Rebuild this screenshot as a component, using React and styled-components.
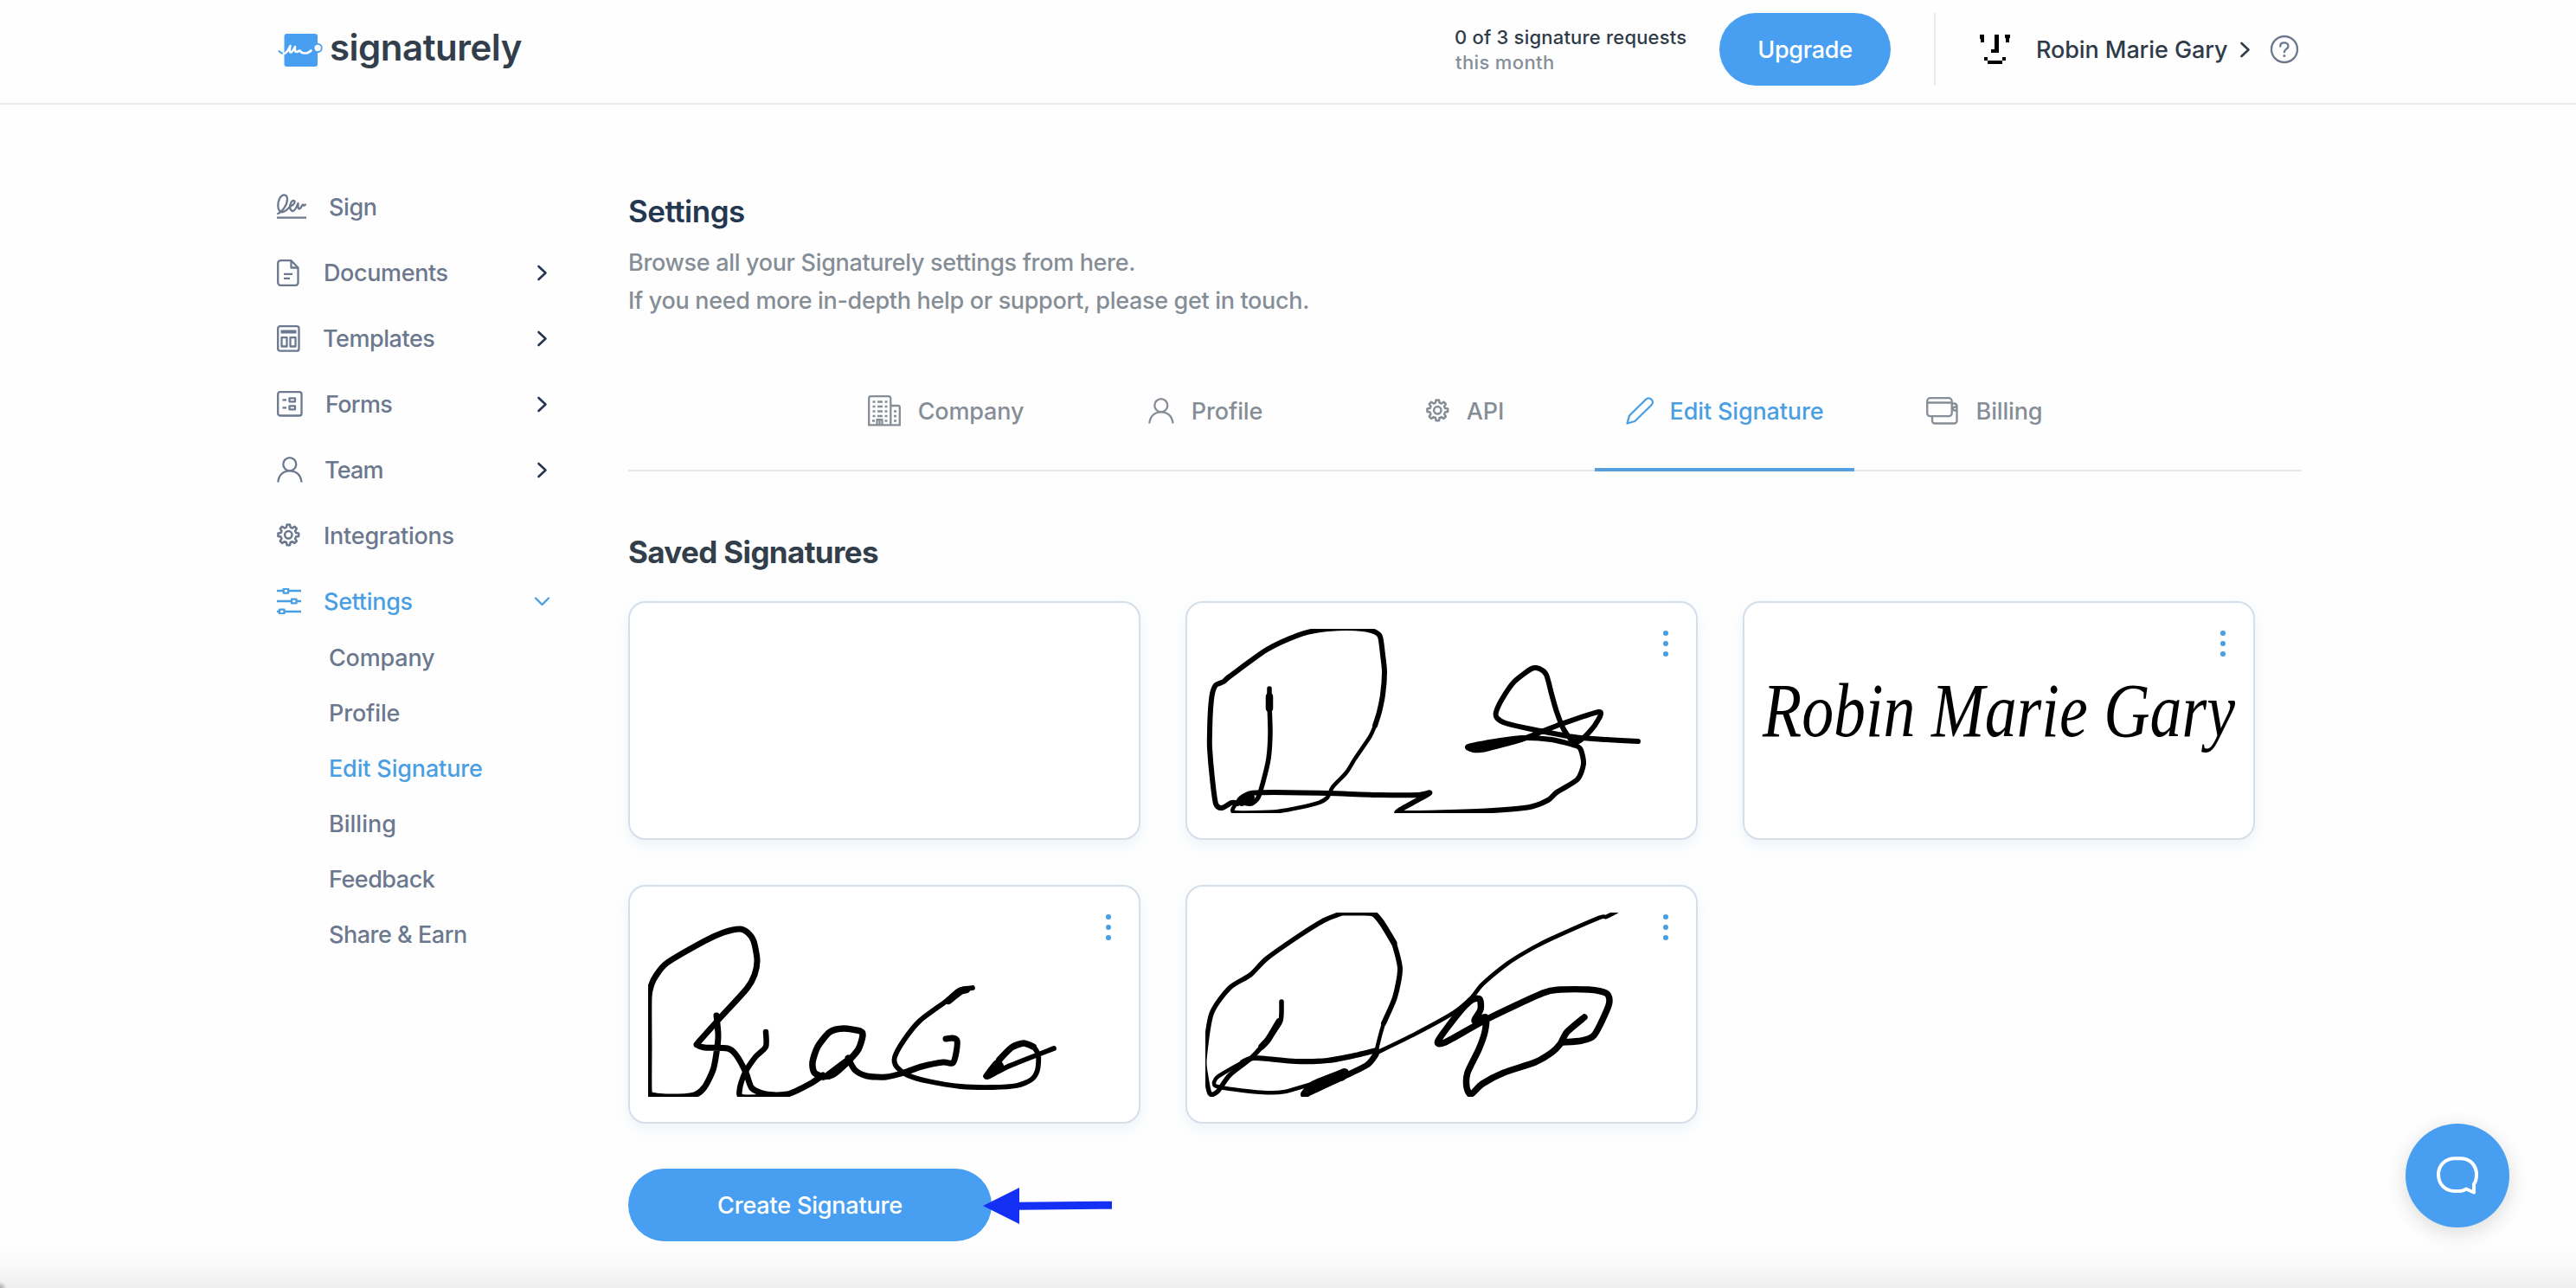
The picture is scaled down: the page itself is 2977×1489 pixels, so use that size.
import React from 'react';
import styled, { createGlobalStyle, css } from 'styled-components';

const BLUE = '#4a9fe3';
const BUTTON = '#489ff1';
const GREY = '#6b788e';
const MUTED = '#858e96';
const NAVY = '#243750';

// Turns a list of pen positions into a smooth svg path.
const pen = (text) => {
  const p = text.split(' ').map((s) => s.split(',').map(Number));
  let d = `M${p[0][0]} ${p[0][1]}`;
  for (let i = 0; i < p.length - 1; i++) {
    const a = p[i - 1] || p[i];
    const b = p[i];
    const c = p[i + 1];
    const e = p[i + 2] || c;
    const k = 8;
    d += `C${(b[0] + (c[0] - a[0]) / k).toFixed(1)} ${(b[1] + (c[1] - a[1]) / k).toFixed(1)} ${(c[0] - (e[0] - b[0]) / k).toFixed(1)} ${(c[1] - (e[1] - b[1]) / k).toFixed(1)} ${c[0]} ${c[1]}`;
  }
  return d;
};

const gearPath = (c, outer, inner) => {
  const pts = [];
  for (let i = 0; i < 8; i++) {
    [[-15, inner], [-8, outer], [8, outer], [15, inner]].forEach(([deg, r]) => {
      const t = ((i * 45 + deg) * Math.PI) / 180;
      pts.push(`${(c + r * Math.sin(t)).toFixed(1)} ${(c - r * Math.cos(t)).toFixed(1)}`);
    });
  }
  return `M${pts.join('L')}Z`;
};

const Line = ({ w, h, sw = 2.3, children, ...rest }) => (
  <svg width={w} height={h} viewBox={`0 0 ${w} ${h}`} fill="none" stroke="currentColor" strokeWidth={sw} strokeLinejoin="round" {...rest}>
    {children}
  </svg>
);

const SignIcon = () => (
  <Line w={34} h={30} strokeLinecap="round">
    <path d="M1.200 23C6 21 12 13 12 6.500C12 3 10.500 1.200 8 1.400C4 1.800 1.200 8 1.300 14C1.400 19 4 22 7.500 21C10.500 20 13 17 15 15C18 13.500 21 11.500 20.500 9C20 6.500 16 8 15.300 13C14.800 17 16 20.200 18.500 20C21.500 19.500 23 15 24.500 11C24.500 13.500 24 17.500 26 17.500C28 17.500 29 12.500 30 12.500C30.500 14.500 32 13.500 33 12.500" />
    <path d="M0 27.700H34" strokeLinecap="butt" />
  </Line>
);
const FileIcon = () => (
  <Line w={26} h={31}>
    <path d="M16.500 1.200H4.200a3 3 0 0 0-3 3v22.600a3 3 0 0 0 3 3H21.500a3 3 0 0 0 3-3V9.500Z" />
    <path d="M16.500 1.200V9.500H24.500M8 16.800H18M8 21.800H15" />
  </Line>
);
const TemplateIcon = () => (
  <Line w={27} h={31}>
    <rect x="1.200" y="1.200" width="24.300" height="28.500" rx="2.500" />
    <rect x="4.500" y="5.500" width="18" height="4" fill="currentColor" stroke="none" />
    <path d="M5.500 14.200h6v10.300h-6zM15.500 14.200h6v10.300h-6z" />
  </Line>
);
const FormIcon = () => (
  <Line w={30} h={30}>
    <rect x="1.200" y="1.200" width="27.300" height="27.300" rx="2.500" />
    <path d="M6.500 10.300h4.500M6.500 19.300h4.500M14.500 8.300h6.500v4h-6.500zM14.500 17.300h6.500v4h-6.500z" />
  </Line>
);
const UserIcon = () => (
  <Line w={30} h={30}>
    <circle cx="14.800" cy="8.700" r="7.500" />
    <path d="M1.300 29.500C2 21 7.500 16.300 14.800 16.300S27.700 21 28.500 29.500" />
  </Line>
);
const GearIcon = () => (
  <Line w={27} h={28} sw={2.500}>
    <path d={gearPath(13.3, 12, 9)} />
    <circle cx="13.300" cy="13.300" r="4.200" />
  </Line>
);
const SlidersIcon = () => (
  <Line w={28} h={30}>
    <path d="M0 3H7.500M13.500 3H28M0 15H16.500M22.500 15H28M8.700 27H28M0 27H2.700" />
    <path d="M7.700 .8h5.500v4.800h-5.500zM17 12.600h5.500v4.800H17zM3 24.600h5.500v4.800H3z" />
  </Line>
);
const CompanyIcon = () => (
  <Line w={38} h={36}>
    <path d="M1.200 34.300V3.500a2.300 2.300 0 0 1 2.300-2.300H24a2.300 2.300 0 0 1 2.300 2.300V34.300M26.300 12H35a1.800 1.800 0 0 1 1.800 1.800V34.300M0 34.300H38" />
    <path d="M10.500 34V28.200H16.500V34M13.500 28V34" />
    <path d="M5.500 7.500H22.500M5.500 13H22.500M5.500 18.500H22.500M5.500 24H22.500" strokeWidth="2.600" strokeDasharray="3 2.500 6 2.500" />
    <path d="M5 29.500h3M19.500 29.500h3M30 18.500h3M30 24h3M30 29.500h3" strokeWidth="2.600" />
  </Line>
);
const PencilIcon = () => (
  <Line w={33} h={32}>
    <path d="M1.500 30.500L4 21.500L23 2.800a4.500 4.500 0 0 1 6.500 6.500L10.300 28Z" />
  </Line>
);
const BillingIcon = () => (
  <Line w={38} h={32}>
    <rect x="1.200" y="1.200" width="28.500" height="21" rx="3.500" />
    <path d="M1.500 6.500H29.500M30 7.500H32.500a3 3 0 0 1 3 3V27.500a3 3 0 0 1-3 3H10a3 3 0 0 1-3-3V22.500" />
    <path d="M35.500 11.500h-2.500a1.800 1.800 0 0 0 0 4h2.500" />
  </Line>
);
const ChevronIcon = () => (
  <Line w={13} h={19} sw={2.600} strokeLinecap="round">
    <path d="M2.500 2L10.500 9.500L2.500 17" />
  </Line>
);
const ChevronDownIcon = () => (
  <Line w={19} h={13} sw={2.400} strokeLinecap="round">
    <path d="M2 2.500L9.500 10L17 2.500" />
  </Line>
);

const LogoMark = () => (
  <svg width="54" height="40" viewBox="0 0 54 40" fill="none">
    <rect x="7.500" y="1" width="38.500" height="38" rx="3" fill={BUTTON} />
    <circle cx="46" cy="17.500" r="5.700" fill={BUTTON} />
    <circle cx="46.200" cy="17.500" r="3.700" fill="#fefefe" />
    <path d="M1 20.500C2.500 23 5 24 8 24" stroke={BUTTON} strokeWidth="2" />
    <path d="M7 24C10.500 24 12.500 19 14.500 15C13.500 19 13.500 22.500 15 22.500C17 22.500 19 18 20 16C19.500 19 20 22.500 22 22C24 21.500 25 19.500 26 21C27.500 24 34 25 38.500 20.500" stroke="#fefefe" strokeWidth="2.600" strokeLinecap="round" strokeLinejoin="round" />
  </svg>
);

const Face = () => (
  <svg width="36" height="34" viewBox="0 0 36 34" fill="#000" shapeRendering="crispEdges">
    <path d="M0 0h5v9h-4v-4h-1zM17 0h5v21h-9v-4h4zM29 0h6v4h-1v5h-4v-5h-1zM5 26h4v4h17v-4h4v4h-4v4h-17v-4h-4z" />
  </svg>
);

const HelpIcon = () => (
  <Line w={34} h={34} sw={2.300}>
    <circle cx="17" cy="17" r="15" />
    <path d="M12.200 13.600C12.200 10.800 14.200 9.300 16.800 9.300S21.500 11 21.500 13.400C21.500 16.800 16.900 16.500 16.900 20.300" strokeLinecap="round" />
    <circle cx="16.900" cy="24.500" r="1.500" fill="currentColor" stroke="none" />
  </Line>
);

const BubbleIcon = () => (
  <svg width="120" height="120" viewBox="0 0 120 120" fill="none" stroke="#fff" strokeWidth="4" strokeLinejoin="round">
    <path d="M57 40.300C46 40.300 38 48 38 59S46 78 57 78H62C65 78 67.500 77.500 70 75.500L79 79.500V70C81.300 67 82 63.500 82 59C82 48 74.500 40.300 63.500 40.300Z" />
  </svg>
);

const signatures = [
  { id: 1 },
  {
    id: 2,
    strokes: [
      [5.5, '97,101 97,118 98,152 96,182 90,208 84,227 76,234 66,233'],
      [8.5, '97,110 97,124'],
      [6, '60,234 64,228 76,222 102,221 164,222 225,224 268,224 282,222 247,242 250,245 306,244 355,242 398,238 419,230 429,221 453,206 460,188 457,172 451,167 423,160 392,158 364,161 327,168 333,172 341,172 351,170 388,160 429,144 478,128 474,142 460,158 449,163 437,148 429,128 423,107 417,85 409,78 400,78 380,93 366,113 359,128 360,135 370,141 400,148 449,157 486,160 523,162'],
      [10, '65,232 75,227'],
      [7.5, '331,169 350,167 388,159'],
      [6, '58,233 53,233 42,239 35,234 31,205 28,170 28,152 29,125 31,107 35,97 44,93 51,87 94,56 131,39 156,33 184,31 205,32 218,35 225,41 228,62 230,82 228,108 224,128 219,144'],
      [4.6, '219,144 213,157 196,182 186,198 170,215 164,227 151,234 107,243 57,244 57,236'],
    ],
  },
  { id: 3, typed: 'Robin Marie Gary' },
  {
    id: 4,
    strokes: [
      [7, '102,151 104,174 102,194 98,214 88,234 76,243 49,245 27,243 24,237 24,187 24,130 27,115 32,105 45,90 88,65 110,55 129,51 138,55 145,65 149,87 146,104 137,120 106,154 81,182 80,185 88,188 115,189 125,197 136,217 143,235 159,242 184,242 210,230 225,220'],
      [6.5, '159,170 159,187 147,199 135,217 129,235 131,245 160,245 184,243'],
      [7.5, '225,222 215,217 213,205 219,187 233,170 249,166 268,169 271,174 266,190 253,205 237,219 225,222'],
      [9.5, '232,220 252,205'],
      [7, '254,200 262,214 276,221 298,222 319,217 339,210 364,205 375,206 379,194 380,180 375,177 367,178'],
      [5.8, '398,119 382,122 368,134 337,157 319,179 308,199 310,210 323,220 347,227 384,233 421,234 449,232 466,225 473,214 474,197 468,187 457,183 443,188 429,202 416,221 441,209 492,189'],
      [8.5, '391,121 384,123 370,134'],
      [7.5, '414,221 426,206 430,211 416,221'],
      [7.5, '429,202 443,188 457,183 468,187'],
    ],
  },
  {
    id: 5,
    strokes: [
      [5.5, '111,135 110,157 98,175 76,200 51,220 37,239 28,241 23,217 22,200 30,149 51,119 75,104 94,85 131,59 160,41 180,33'],
      [7.5, '108,158 96,178 88,187'],
      [7, '180,32 200,32 217,33 227,44 241,67'],
      [6, '241,67 248,97 242,130 229,160'],
      [4.5, '229,160 225,174 221,190 219,199'],
      [10, '138,242 149,231 184,217'],
      [7, '137,243 182,222 210,208 220,196'],
      [4.5, '182,224 147,230 115,239 90,240 53,236 34,232 37,222 66,205'],
      [6.2, '66,205 80,200 127,204 164,203 192,198 221,191'],
      [4.8, '221,194 266,172 311,147 331,130 343,115 372,91 396,76 421,63 478,38 486,37 498,31'],
      [7.5, '461,153 441,170 433,184 423,194 404,205 368,217 343,230 330,242 325,234 326,217 339,190 346,170 347,153 334,157 341,144 340,132 331,133 315,149 292,180 300,182 349,155 413,125 433,121 466,121 486,125 490,134 486,147 472,174 458,180 437,182'],
    ],
  },
];

const nav = [
  { name: 'Sign', Icon: SignIcon, x: 60, ls: -0.4 },
  { name: 'Documents', Icon: FileIcon, x: 54, ls: -0.38, more: true },
  { name: 'Templates', Icon: TemplateIcon, x: 53, ls: -0.46, more: true },
  { name: 'Forms', Icon: FormIcon, x: 56, ls: -0.7, more: true },
  { name: 'Team', Icon: UserIcon, x: 55, ls: -0.8, more: true },
  { name: 'Integrations', Icon: GearIcon, x: 54, ls: -0.25 },
  { name: 'Settings', Icon: SlidersIcon, x: 54, ls: -0.3, active: true },
];

const subNav = [
  { name: 'Company', ls: -0.2 },
  { name: 'Profile', ls: -0.16 },
  { name: 'Edit Signature', ls: -0.16, active: true },
  { name: 'Billing', ls: 0 },
  { name: 'Feedback', ls: -0.5 },
  { name: 'Share & Earn', ls: -0.48 },
];

const tabs = [
  { name: 'Company', Icon: CompanyIcon, gap: 20 },
  { name: 'Profile', Icon: UserIcon, gap: 20 },
  { name: 'API', Icon: GearIcon, gap: 20 },
  { name: 'Edit Signature', Icon: PencilIcon, gap: 18, active: true },
  { name: 'Billing', Icon: BillingIcon, gap: 20 },
];

function Header() {
  return (
    <TopBar>
      <Logo>
        <LogoMark />
        <LogoText>signaturely</LogoText>
      </Logo>
      <Account>
        <Usage>
          <UsageCount>0 of 3 signature requests</UsageCount>
          <UsagePeriod>this month</UsagePeriod>
        </Usage>
        <Button $width={198} $ls={-0.28}>Upgrade</Button>
        <Divider />
        <Face />
        <UserName>Robin Marie Gary</UserName>
        <ChevronIcon />
        <Help><HelpIcon /></Help>
      </Account>
    </TopBar>
  );
}

function Sidebar() {
  return (
    <Nav>
      {nav.map(({ name, Icon, x, ls, more, active }) => (
        <NavItem key={name} $active={active}>
          <NavIcon $width={x}><Icon /></NavIcon>
          <NavLabel $ls={ls}>{name}</NavLabel>
          {more && <NavArrow><ChevronIcon /></NavArrow>}
          {active && <NavArrow $open><ChevronDownIcon /></NavArrow>}
        </NavItem>
      ))}
      <SubNav>
        {subNav.map((item) => (
          <SubItem key={item.name} $active={item.active} $ls={item.ls}>{item.name}</SubItem>
        ))}
      </SubNav>
    </Nav>
  );
}

function SignatureCard({ item }) {
  return (
    <Card>
      {item.strokes && (
        <svg width="544" height="213" viewBox="23 32 544 213" fill="none" stroke="#000" strokeLinecap="round" strokeLinejoin="round">
          {item.strokes.map(([width, points], idx) => (
            <path key={idx} d={pen(points)} strokeWidth={width} />
          ))}
        </svg>
      )}
      {item.typed && <Typed>{item.typed}</Typed>}
      {(item.strokes || item.typed) && (
        <Kebab>
          <Dot />
          <Dot />
          <Dot />
        </Kebab>
      )}
    </Card>
  );
}

function App() {
  return (
    <Page>
      <GlobalStyle />
      <Header />
      <Body>
        <Sidebar />
        <Main>
          <Title>Settings</Title>
          <Intro>
            Browse all your Signaturely settings from here.<br />
            If you need more in-depth help or support, please get in touch.
          </Intro>
          <Tabs>
            {tabs.map(({ name, Icon, gap, active }) => (
              <Tab key={name} $gap={gap} $active={active}>
                <Icon />
                <span>{name}</span>
              </Tab>
            ))}
          </Tabs>
          <SubTitle>Saved Signatures</SubTitle>
          <Cards>
            {signatures.map((item) => (
              <SignatureCard key={item.id} item={item} />
            ))}
          </Cards>
          <Actions>
            <Button $width={420} $ls={-0.19}>Create Signature</Button>
            <Pointer width="150" height="44" viewBox="0 0 150 44" fill="#1530f5">
              <path d="M0 23L42 2V18.800L149 17.700V26.700L42 27.800V44Z" />
            </Pointer>
          </Actions>
        </Main>
      </Body>
      <Shade />
      <Chat><BubbleIcon /></Chat>
    </Page>
  );
}

const GlobalStyle = createGlobalStyle`
  body {
    margin: 0;
    background: #fefefe;
  }
  * {
    box-sizing: border-box;
  }
  svg {
    display: block;
    flex: none;
  }
`;

const Page = styled.div`
  position: relative;
  height: 1489px;
  overflow: hidden;
  background: #fefefe;
  font-family: Inter, 'Liberation Sans', sans-serif;
  font-size: 27px;
  font-weight: 500;
  white-space: nowrap;
`;

const TopBar = styled.header`
  display: flex;
  align-items: flex-start;
  justify-content: space-between;
  height: 121px;
  padding: 15px 320px 0 321px;
  border-bottom: 2px solid #ebebec;
`;

const Logo = styled.div`
  display: flex;
  align-items: center;
  gap: 6px;
  height: 86px;
`;

const LogoText = styled.div`
  margin-top: -8px;
  color: #323e4b;
  font-size: 42px;
  font-weight: 600;
  letter-spacing: -0.49px;
`;

const Account = styled.div`
  display: flex;
  align-items: center;
  height: 84px;
  color: #2f3b48;
`;

const Usage = styled.div`
  width: 306px;
  padding-top: 2px;
  font-size: 22px;
  line-height: 29px;
`;

const UsageCount = styled.div`
  letter-spacing: 0.2px;
`;

const UsagePeriod = styled.div`
  padding-left: 1px;
  color: #868f98;
  letter-spacing: 0.37px;
`;

const Button = styled.button`
  width: ${(p) => p.$width}px;
  height: 84px;
  padding: 0;
  border: 0;
  border-radius: 42px;
  background: ${BUTTON};
  color: #fff;
  font: inherit;
  font-size: 27px;
  letter-spacing: ${(p) => p.$ls}px;
`;

const Divider = styled.div`
  width: 2px;
  height: 84px;
  margin: 0 51px 0 50px;
  background: #e9ebed;
`;

const UserName = styled.div`
  width: 264px;
  padding-left: 29px;
  letter-spacing: -0.09px;
`;

const Help = styled.div`
  margin-left: 22px;
  color: ${GREY};
`;

const Body = styled.div`
  display: flex;
  width: 2340px;
  margin-left: 320px;
`;

const Nav = styled.nav`
  width: 406px;
  padding-top: 80px;
  color: ${GREY};
`;

const NavItem = styled.div`
  display: flex;
  align-items: center;
  width: 316px;
  height: 76px;
  ${(p) => p.$active && css`
    color: ${BLUE};
  `}
`;

const NavIcon = styled.div`
  width: ${(p) => p.$width}px;
`;

const NavLabel = styled.div`
  flex: 1;
  letter-spacing: ${(p) => p.$ls}px;
`;

const NavArrow = styled.div`
  margin-right: ${(p) => (p.$open ? 0 : 3)}px;
  color: ${(p) => (p.$open ? BLUE : NAVY)};
`;

const SubNav = styled.div`
  margin-top: -4px;
  padding-left: 60px;
`;

const SubItem = styled.div`
  height: 64px;
  line-height: 64px;
  color: ${(p) => (p.$active ? BLUE : GREY)};
  letter-spacing: ${(p) => p.$ls}px;
`;

const Main = styled.main`
  width: 1934px;
  padding-top: 102px;
`;

const Title = styled.h1`
  margin: 0;
  color: ${NAVY};
  font-size: 35px;
  font-weight: 600;
  line-height: 42px;
  letter-spacing: -0.5px;
`;

const Intro = styled.p`
  margin: 17px 0 0;
  color: ${MUTED};
  line-height: 44px;
  letter-spacing: -0.33px;
`;

const Tabs = styled.div`
  display: flex;
  justify-content: center;
  height: 136px;
  margin-top: 39px;
  border-bottom: 2px solid #e7e8ea;
`;

const Tab = styled.div`
  display: flex;
  align-items: center;
  justify-content: center;
  gap: ${(p) => p.$gap}px;
  width: 300px;
  height: 136px;
  border-bottom: 4px solid ${(p) => (p.$active ? '#569fdf' : 'transparent')};
  color: ${(p) => (p.$active ? BLUE : MUTED)};
  letter-spacing: -0.15px;
`;

const SubTitle = styled.h2`
  margin: 72px 0 36px;
  color: #323f4b;
  font-size: 35px;
  font-weight: 700;
  line-height: 42px;
  letter-spacing: -0.65px;
`;

const Cards = styled.div`
  display: grid;
  grid-template-columns: repeat(3, 592px);
  grid-auto-rows: 276px;
  gap: 52px;
`;

const Card = styled.div`
  position: relative;
  padding: 30px 21px;
  border: 2px solid #d4dfea;
  border-radius: 20px;
  background: #fff;
  box-shadow: 0 6px 16px rgba(74, 144, 210, 0.1);
`;

const Typed = styled.div`
  height: 212px;
  color: #000;
  font-family: 'Liberation Serif', cursive;
  font-size: 88px;
  font-style: italic;
  font-weight: 400;
  line-height: 189px;
  transform: scaleX(0.84);
  transform-origin: 0 50%;
`;

const Kebab = styled.div`
  position: absolute;
  top: 32px;
  right: 32px;
  display: flex;
  flex-direction: column;
  gap: 6px;
`;

const Dot = styled.span`
  width: 6px;
  height: 6px;
  border-radius: 50%;
  background: ${BLUE};
`;

const Actions = styled.div`
  display: flex;
  align-items: center;
  margin-top: 52px;
`;

const Pointer = styled.svg`
  margin-left: -10px;
`;

const Shade = styled.div`
  position: absolute;
  right: 0;
  bottom: 0;
  left: 0;
  height: 54px;
  background:
    radial-gradient(circle at 0 100%, rgba(0, 0, 0, 0.3), rgba(0, 0, 0, 0) 8px),
    linear-gradient(to bottom, rgba(0, 0, 0, 0), rgba(0, 0, 0, 0.018) 50%, rgba(0, 0, 0, 0.06));
`;

const Chat = styled.div`
  position: absolute;
  right: 77px;
  bottom: 70px;
  border-radius: 50%;
  background: ${BUTTON};
  box-shadow: 0 6px 24px rgba(0, 0, 0, 0.14);
`;

export default App;
